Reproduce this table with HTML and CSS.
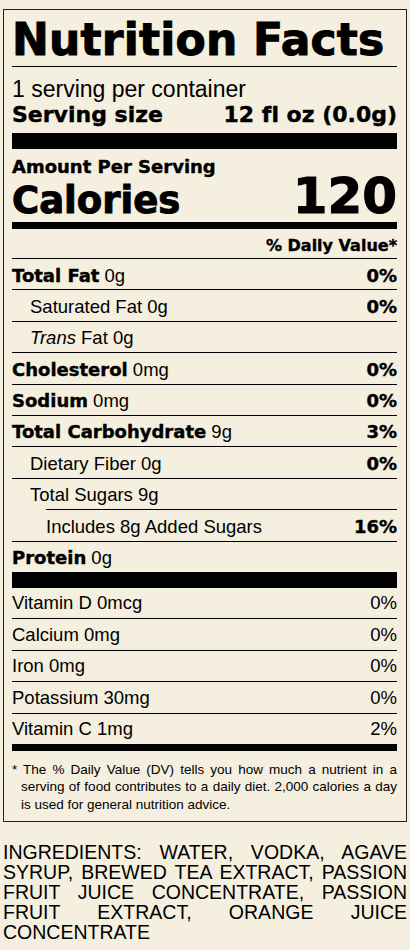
FILE: index.html
```html
<!DOCTYPE html>
<html lang="en">
<head>
    <meta charset="UTF-8">
    <meta name="viewport" content="width=device-width, initial-scale=1.0">
    <title>Nutrition Facts</title>
    <link rel="stylesheet" href="styles.css">
</head>
<body>
    <div class="label">
        <h1 class="label-title">Nutrition Facts</h1>
        <p class="servings-count">1 serving per container</p>
        <p class="serving-size"><span>Serving size</span><span>12 fl oz (0.0g)</span></p>
        <div class="bar bar-thick"></div>
        <p class="amount">Amount Per Serving</p>
        <p class="calories"><span>Calories</span><span class="calories-value">120</span></p>
        <div class="bar bar-medium"></div>
        <p class="dv-head">% Daily Value*</p>

        <ul class="nutrients">
            <li class="row"><span><b>Total Fat</b> 0g</span><b>0%</b></li>
            <li class="row row-sub"><span>Saturated Fat 0g</span><b>0%</b></li>
            <li class="row row-sub"><span><i>Trans</i> Fat 0g</span></li>
            <li class="row"><span><b>Cholesterol</b> 0mg</span><b>0%</b></li>
            <li class="row"><span><b>Sodium</b> 0mg</span><b>0%</b></li>
            <li class="row"><span><b>Total Carbohydrate</b> 9g</span><b>3%</b></li>
            <li class="row row-sub"><span>Dietary Fiber 0g</span><b>0%</b></li>
            <li class="row row-sub"><span>Total Sugars 9g</span></li>
            <li class="row row-added"><span>Includes 8g Added Sugars</span><b>16%</b></li>
            <li class="row"><span><b>Protein</b> 0g</span></li>
        </ul>
        <div class="bar bar-thick"></div>

        <ul class="vitamins">
            <li class="vit-row"><span>Vitamin D 0mcg</span><span>0%</span></li>
            <li class="vit-row"><span>Calcium 0mg</span><span>0%</span></li>
            <li class="vit-row"><span>Iron 0mg</span><span>0%</span></li>
            <li class="vit-row"><span>Potassium 30mg</span><span>0%</span></li>
            <li class="vit-row"><span>Vitamin C 1mg</span><span>2%</span></li>
        </ul>
        <div class="bar bar-medium"></div>

        <p class="footnote">* The % Daily Value (DV) tells you how much a nutrient in a serving of food contributes to a daily diet. 2,000 calories a day is used for general nutrition advice.</p>
    </div>

    <p class="ingredients">INGREDIENTS: WATER, VODKA, AGAVE SYRUP, BREWED TEA EXTRACT, PASSION FRUIT JUICE CONCENTRATE, PASSION FRUIT EXTRACT, ORANGE JUICE CONCENTRATE</p>
</body>
</html>
```

FILE: styles.css
```css
body {
    margin: 0;
    padding: 9px 3px 0;
    background-color: #f5efdf;
    color: #000;
    font-family: 'Liberation Sans', Arial, sans-serif;
    font-variant-ligatures: none;
}
.label {
    border: 1px solid #222;
    padding: 0 9px 0 8px;
}
.label p,
.label h1,
.label ul {
    margin: 0;
    padding: 0;
    list-style: none;
}
.label b,
.label-title,
.serving-size,
.amount,
.calories,
.dv-head {
    font-family: 'DejaVu Sans', sans-serif;
    font-weight: bold;
    -webkit-text-stroke: 0.4px #000;
}

/* header */
.label .label-title {
    font-size: 44px;
    line-height: 44px;
    letter-spacing: 0.2px;
    padding: 8px 0 4px;
    border-bottom: 1px solid #000;
    white-space: nowrap;
    -webkit-text-stroke: 1px #000;
}
.label .servings-count {
    font-size: 23px;
    line-height: 26px;
    margin-top: 9px;
}
.serving-size {
    display: flex;
    justify-content: space-between;
    font-size: 22px;
    line-height: 25px;
}

.bar {
    background-color: #000;
}
.bar-thick {
    height: 16px;
    margin-top: 6px;
}
.bar-medium {
    height: 7px;
    margin-top: 1px;
}

/* calories */
.label .amount {
    font-size: 18px;
    line-height: 19px;
    margin-top: 8px;
}
.calories {
    display: flex;
    justify-content: space-between;
    align-items: baseline;
    font-size: 37px;
    line-height: 40px;
    -webkit-text-stroke: 1px #000;
}
.calories-value {
    font-size: 50px;
}
.label .dv-head {
    text-align: right;
    font-size: 16px;
    line-height: 20px;
    padding: 7px 0 2px;
}

/* nutrient rows */
.row {
    display: flex;
    justify-content: space-between;
    align-items: baseline;
    border-top: 1px solid #000;
    padding: 4.5px 0 1.9px;
    font-size: 18.5px;
    line-height: 24px;
}
.row b {
    font-size: 18px;
}
.row-sub {
    padding-left: 18px;
}
.row-added {
    margin-left: 34px;
}
.nutrients + .bar-thick {
    margin-top: 0;
}

.vit-row {
    display: flex;
    justify-content: space-between;
    align-items: baseline;
    border-top: 1px solid #000;
    padding: 3.5px 0 3px;
    font-size: 18.5px;
    line-height: 24px;
}
.vit-row:first-child {
    border-top: none;
}
.vitamins + .bar-medium {
    margin-top: 0;
}

.label .footnote {
    font-size: 13.5px;
    line-height: 17.5px;
    padding: 9.5px 0 8px 9px;
    text-indent: -9px;
    text-align: justify;
}

.ingredients {
    margin: 20px 0 0;
    font-size: 19.5px;
    line-height: 20px;
    text-align: justify;
}
```
